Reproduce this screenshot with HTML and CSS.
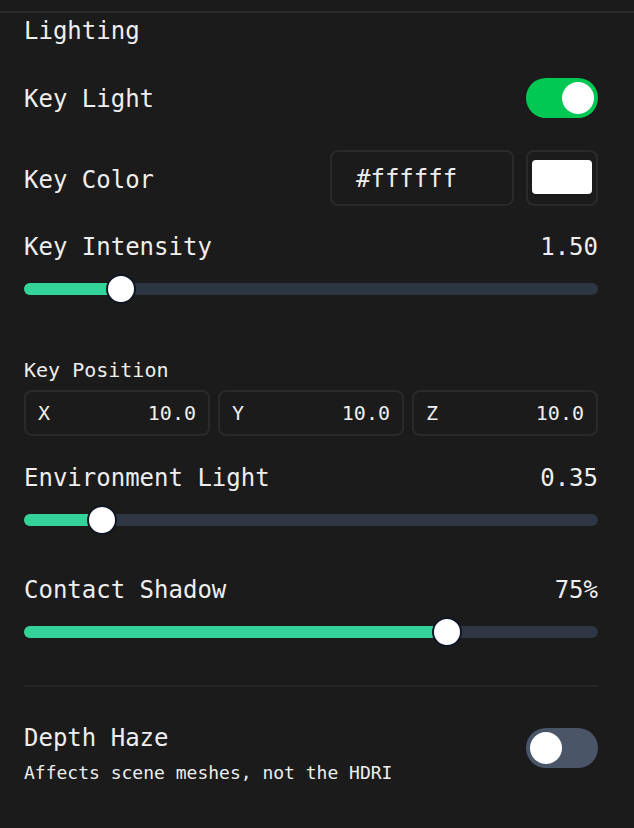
FILE: index.html
```html
<!DOCTYPE html>
<html>
<head>
<meta charset="utf-8">
<link rel="stylesheet" href="styles.css">
</head>
<body>
<div class="panel">
  <div class="section-title">Lighting</div>

  <div class="row row-toggle">
    <span class="label">Key Light</span>
    <span class="toggle on"><span class="knob"></span></span>
  </div>

  <div class="row row-color">
    <span class="label">Key Color</span>
    <div class="color-controls">
      <div class="hex-input">#ffffff</div>
      <div class="swatch"><span class="swatch-fill"></span></div>
    </div>
  </div>

  <div class="slider-group first">
    <div class="slider-head"><span class="label">Key Intensity</span><span class="value">1.50</span></div>
    <div class="slider">
      <div class="track"><div class="fill" style="width: calc(15px + (100% - 30px) * 0.15)"></div></div>
      <div class="thumb" style="left: calc((100% - 30px) * 0.15)"></div>
    </div>
  </div>

  <div class="vec-group">
    <div class="small-label">Key Position</div>
    <div class="vec-row">
      <div class="vec-box"><span>X</span><span>10.0</span></div>
      <div class="vec-box"><span>Y</span><span>10.0</span></div>
      <div class="vec-box"><span>Z</span><span>10.0</span></div>
    </div>
  </div>

  <div class="slider-group env">
    <div class="slider-head"><span class="label">Environment Light</span><span class="value">0.35</span></div>
    <div class="slider">
      <div class="track"><div class="fill" style="width: calc(15px + (100% - 30px) * 0.1167)"></div></div>
      <div class="thumb" style="left: calc((100% - 30px) * 0.1167)"></div>
    </div>
  </div>

  <div class="slider-group contact">
    <div class="slider-head"><span class="label">Contact Shadow</span><span class="value">75%</span></div>
    <div class="slider">
      <div class="track"><div class="fill" style="width: calc(15px + (100% - 30px) * 0.75)"></div></div>
      <div class="thumb" style="left: calc((100% - 30px) * 0.75)"></div>
    </div>
  </div>

  <div class="divider"></div>

  <div class="row row-haze">
    <div class="haze-text">
      <div class="label">Depth Haze</div>
      <div class="sub">Affects scene meshes, not the HDRI</div>
    </div>
    <span class="toggle off"><span class="knob"></span></span>
  </div>
</div>
</body>
</html>
```

FILE: styles.css
```css
html, body {
  margin: 0;
  padding: 0;
  background: #1b1b1b;
}
body {
  font-family: "DejaVu Sans Mono", "Liberation Mono", monospace;
  color: #eeeeee;
  height: 828px;
  overflow: hidden;
}
.panel {
  margin-top: 11px;
  border-top: 2px solid #2b2b2b;
  padding: 4px 36px 0 24px;
}
.section-title {
  font-size: 24px;
  line-height: 28px;
}
.label {
  font-size: 24px;
  line-height: 28px;
}
.row {
  display: flex;
  justify-content: space-between;
  align-items: center;
}
.row-toggle {
  margin-top: 33px;
}
.row-toggle .label {
  padding-top: 2px;
}
.toggle {
  display: flex;
  align-items: center;
  width: 72px;
  height: 40px;
  border-radius: 20px;
  padding: 0 4px;
  box-sizing: border-box;
}
.toggle .knob {
  width: 32px;
  height: 32px;
  border-radius: 50%;
  background: #ffffff;
}
.toggle.on {
  background: #00c853;
  justify-content: flex-end;
}
.toggle.off {
  background: #4a5568;
  justify-content: flex-start;
}
.row-color {
  margin-top: 32px;
}
.row-color .label {
  padding-top: 3px;
}
.color-controls {
  display: flex;
  gap: 12px;
}
.hex-input {
  width: 184px;
  height: 56px;
  box-sizing: border-box;
  border: 2px solid #2a2a2a;
  border-radius: 8px;
  padding-left: 24px;
  font-size: 24px;
  line-height: 54px;
}
.swatch {
  width: 72px;
  height: 56px;
  box-sizing: border-box;
  border: 2px solid #2a2a2a;
  border-radius: 8px;
  padding: 8px 4px 10px;
}
.swatch-fill {
  display: block;
  width: 100%;
  height: 100%;
  background: #ffffff;
  border-radius: 4px;
}
.slider-group.first {
  margin-top: 27px;
}
.slider-group.env {
  margin-top: 28px;
}
.slider-group.contact {
  margin-top: 41px;
}
.slider-head {
  display: flex;
  justify-content: space-between;
  align-items: baseline;
}
.value {
  font-size: 24px;
  line-height: 28px;
}
.slider {
  position: relative;
  height: 30px;
  margin-top: 13px;
  display: flex;
  align-items: center;
}
.track {
  width: 100%;
  height: 12px;
  border-radius: 6px;
  background: #2d3642;
  overflow: hidden;
}
.fill {
  height: 100%;
  background: #34d399;
}
.thumb {
  position: absolute;
  top: 0;
  width: 30px;
  height: 30px;
  box-sizing: border-box;
  border-radius: 50%;
  background: #ffffff;
  border: 2px solid #0f1623;
}
.vec-group {
  margin-top: 54px;
}
.small-label {
  font-size: 20px;
  line-height: 24px;
}
.vec-row {
  margin-top: 8px;
  display: grid;
  grid-template-columns: 1fr 1fr 1fr;
  gap: 8px;
}
.vec-box {
  height: 46px;
  box-sizing: border-box;
  border: 2px solid #2a2a2a;
  border-radius: 8px;
  padding: 0 12px;
  display: flex;
  justify-content: space-between;
  align-items: center;
  font-size: 20px;
}
.divider {
  margin-top: 38px;
  height: 2px;
  background: #262626;
}
.row-haze {
  margin-top: 37px;
  align-items: flex-start;
}
.row-haze .toggle {
  margin-top: 4px;
}
.sub {
  margin-top: 10px;
  font-size: 18px;
  line-height: 22px;
}
```
